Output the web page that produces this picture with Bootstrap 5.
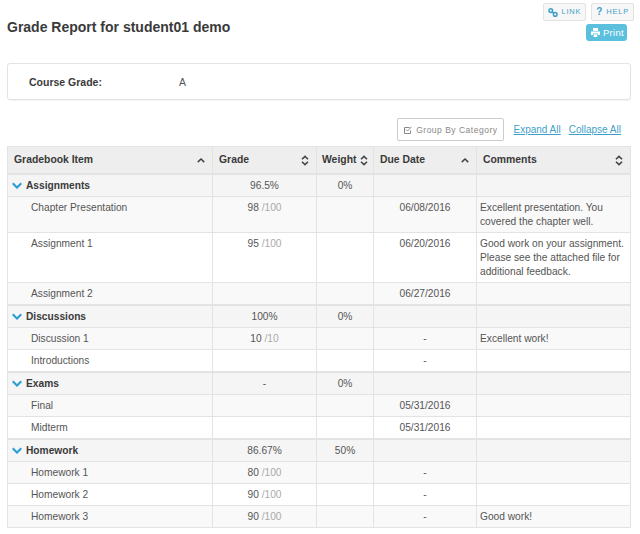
<!DOCTYPE html>
<html lang="en">
<head>
    <meta charset="UTF-8">
    <meta name="viewport" content="width=device-width, initial-scale=1.0">
    <title>Grade Report</title>
    <link href="https://cdn.jsdelivr.net/npm/bootstrap@5.3.0/dist/css/bootstrap.min.css" rel="stylesheet">
    <script src="https://cdn.jsdelivr.net/npm/bootstrap@5.3.0/dist/js/bootstrap.bundle.min.js"></script>
    <style>
        body {
            background-color: #fff;
            color: #555;
            font-family: "Liberation Sans", Arial, sans-serif;
            font-size: 10.2px;
            line-height: 14px;
        }
        .page-wrap {
            padding: 3px 9px 0 7px;
        }
        .top-line {
            height: 38px;
        }
        .report-title {
            font-size: 14px;
            font-weight: 700;
            line-height: 18px;
            margin: 15px 0 0;
            color: #3a3a3a;
        }
        .top-tools {
            margin-right: -3px;
            gap: 3px;
        }
        .tool-gap {
            gap: 5px;
        }
        .tool-btn {
            background: #f7f7f7;
            border: 1px solid #e3e3e3;
            border-radius: 2px;
            color: #3f9fc9;
            font-size: 7.5px;
            letter-spacing: .8px;
            line-height: 12px;
            padding: 0 4px;
            height: 18px;
            gap: 3px;
        }
        .tool-btn b {
            font-size: 10px;
        }
        .print-btn {
            background: #5bc0de;
            border: 0;
            border-radius: 3px;
            color: #fff;
            font-size: 9.5px;
            letter-spacing: .3px;
            line-height: 12px;
            padding: 0 3px 0 5px;
            height: 17px;
            margin-right: 7px;
            gap: 3px;
        }
        .grade-box {
            border: 1px solid #e3e3e3;
            border-radius: 3px;
            box-shadow: 0 1px 1px rgba(0, 0, 0, .05);
            height: 37px;
            margin: 22px 0 18px;
            padding: 0 21px;
            font-size: 10.5px;
        }
        .grade-label {
            font-weight: 700;
            width: 150px;
            color: #3a3a3a;
        }
        .table-tools {
            padding-right: 10px;
        }
        .group-btn {
            background: #fff;
            border: 1px solid #ccc;
            border-radius: 2px;
            color: #888;
            font-size: 8.5px;
            letter-spacing: .5px;
            height: 23px;
            padding: 0 6px;
            margin-right: 1px;
        }
        .tool-link {
            color: #3f9fc9;
            font-size: 10px;
            margin-left: 8px;
        }
        .grade-table {
            table-layout: fixed;
            width: 624px;
            margin: 5px 0 0;
            --bs-table-bg: transparent;
            --bs-table-color: #555;
            border-color: #e3e3e3;
        }
        .grade-table > * > tr > * {
            padding: 4px 3px 3px;
            border: 1px solid #e3e3e3;
            font-size: 10.2px;
            line-height: 14px;
            vertical-align: top;
            box-shadow: none;
        }
        .grade-table > thead > tr > th {
            background: #eee;
            color: #3a3a3a;
            height: 27px;
            padding: 6px 7px 5px 6px;
            vertical-align: middle;
            font-weight: 700;
            font-size: 10.4px;
            border-bottom-width: 2px;
        }
        .grade-table > thead > tr > th.col-weight {
            padding-left: 5px;
            padding-right: 5px;
        }
        .col-item { width: 205px; }
        .col-grade { width: 104px; }
        .col-weight { width: 57px; }
        .col-due { width: 103px; }
        .cat-row > td {
            background: #f5f5f5;
            border-top-width: 2px !important;
        }
        .cat-row > td:first-child {
            font-weight: 700;
            color: #3a3a3a;
            padding-left: 4px;
        }
        .odd-row > td { background: #f9f9f9; }
        .item-row > td:first-child { padding-left: 23px; }
        .cell-mid { text-align: center; }
        .out-of { color: #aaa; }
        .head-in {
            display: flex;
            justify-content: space-between;
            align-items: center;
        }
        .cat-chev {
            margin-right: 4px;
        }
    </style>
</head>
<body>
    <div class="page-wrap">
        <div class="d-flex justify-content-between top-line">
            <h1 class="report-title">Grade Report for student01 demo</h1>
            <div class="d-flex flex-column align-items-end top-tools">
                <div class="d-flex tool-gap">
                    <button class="tool-btn d-flex align-items-center">
                        <svg width="10" height="9" viewBox="0 0 10 9" fill="none" stroke="#3f9fc9" stroke-width="1.5"><circle cx="2.8" cy="2.6" r="1.8"/><circle cx="7.2" cy="6.4" r="1.8"/><path d="M4 3.6l2 1.8"/></svg>
                        LINK
                    </button>
                    <button class="tool-btn d-flex align-items-center"><b>?</b> HELP</button>
                </div>
                <button class="print-btn d-flex align-items-center">
                    <svg width="9" height="9" viewBox="0 0 9 9" fill="#fff"><path d="M2 0h5v3H2zM0 3.5h9v3.5H7V5.5H2V7H0zM2.6 6.2h3.8V9H2.6z"/></svg>
                    Print
                </button>
            </div>
        </div>
        <div class="grade-box d-flex align-items-center">
            <div class="grade-label">Course Grade:</div>
            <div>A</div>
        </div>
        <div class="d-flex justify-content-end align-items-center table-tools">
            <button class="group-btn d-flex align-items-center gap-1">
                <svg width="8" height="8" viewBox="0 0 8 8" fill="none" stroke="#888"><path d="M6.5 4.5v3h-6v-6h5"/><path d="M2 3.5l1.5 1.5L7.5.8"/></svg>
                Group By Category
            </button>
            <a class="tool-link" href="#">Expand All</a>
            <a class="tool-link" href="#">Collapse All</a>
        </div>
        <table class="table grade-table" id="gradeTable">
            <thead>
                <tr>
                    <th class="col-item"><div class="head-in">Gradebook Item <svg width="8" height="5" viewBox="0 0 9 6" fill="#444"><path d="M4.5 0L9 4.3 7.7 5.6 4.5 2.5 1.3 5.6 0 4.3z"/></svg></div></th>
                    <th class="col-grade"><div class="head-in">Grade <svg width="8" height="11" viewBox="0 0 9 12" fill="#444"><path d="M4.5 0L8.5 4 7.3 5.2 4.5 2.5 1.7 5.2.5 4zM4.5 12L.5 8l1.2-1.2 2.8 2.7 2.8-2.7L8.5 8z"/></svg></div></th>
                    <th class="col-weight"><div class="head-in">Weight <svg width="8" height="11" viewBox="0 0 9 12" fill="#444"><path d="M4.5 0L8.5 4 7.3 5.2 4.5 2.5 1.7 5.2.5 4zM4.5 12L.5 8l1.2-1.2 2.8 2.7 2.8-2.7L8.5 8z"/></svg></div></th>
                    <th class="col-due"><div class="head-in">Due Date <svg width="8" height="5" viewBox="0 0 9 6" fill="#444"><path d="M4.5 0L9 4.3 7.7 5.6 4.5 2.5 1.3 5.6 0 4.3z"/></svg></div></th>
                    <th><div class="head-in">Comments <svg width="8" height="11" viewBox="0 0 9 12" fill="#444"><path d="M4.5 0L8.5 4 7.3 5.2 4.5 2.5 1.7 5.2.5 4zM4.5 12L.5 8l1.2-1.2 2.8 2.7 2.8-2.7L8.5 8z"/></svg></div></th>
                </tr>
            </thead>
            <tbody id="gradeRows"></tbody>
        </table>
    </div>
    <script>
        const gradeData = [
            { cat: "Assignments", grade: "96.5%", weight: "0%", items: [
                ["Chapter Presentation", "98", "/100", "06/08/2016", "Excellent presentation. You covered the chapter well."],
                ["Assignment 1", "95", "/100", "06/20/2016", "Good work on your assignment. Please see the attached file for additional feedback."],
                ["Assignment 2", "", "", "06/27/2016", ""]
            ]},
            { cat: "Discussions", grade: "100%", weight: "0%", items: [
                ["Discussion 1", "10", "/10", "-", "Excellent work!"],
                ["Introductions", "", "", "-", ""]
            ]},
            { cat: "Exams", grade: "-", weight: "0%", items: [
                ["Final", "", "", "05/31/2016", ""],
                ["Midterm", "", "", "05/31/2016", ""]
            ]},
            { cat: "Homework", grade: "86.67%", weight: "50%", items: [
                ["Homework 1", "80", "/100", "-", ""],
                ["Homework 2", "90", "/100", "-", ""],
                ["Homework 3", "90", "/100", "-", "Good work!"]
            ]}
        ];
        const chevron = '<svg class="cat-chev" width="10" height="7" viewBox="0 0 10 7" fill="#2a9fd6"><path d="M1.5.5L5 4 8.5.5 10 2 5 7 0 2z"/></svg>';
        let rowsHtml = "";
        gradeData.forEach(group => {
            rowsHtml += `<tr class="cat-row"><td>${chevron}${group.cat}</td><td class="cell-mid">${group.grade}</td><td class="cell-mid">${group.weight}</td><td></td><td></td></tr>`;
            group.items.forEach((item, index) => {
                const score = item[1] ? `${item[1]} <span class="out-of">${item[2]}</span>` : "";
                rowsHtml += `<tr class="item-row ${index % 2 === 0 ? "odd-row" : ""}"><td>${item[0]}</td><td class="cell-mid">${score}</td><td></td><td class="cell-mid">${item[3]}</td><td>${item[4]}</td></tr>`;
            });
        });
        document.getElementById("gradeRows").innerHTML = rowsHtml;
    </script>
</body>
</html>
